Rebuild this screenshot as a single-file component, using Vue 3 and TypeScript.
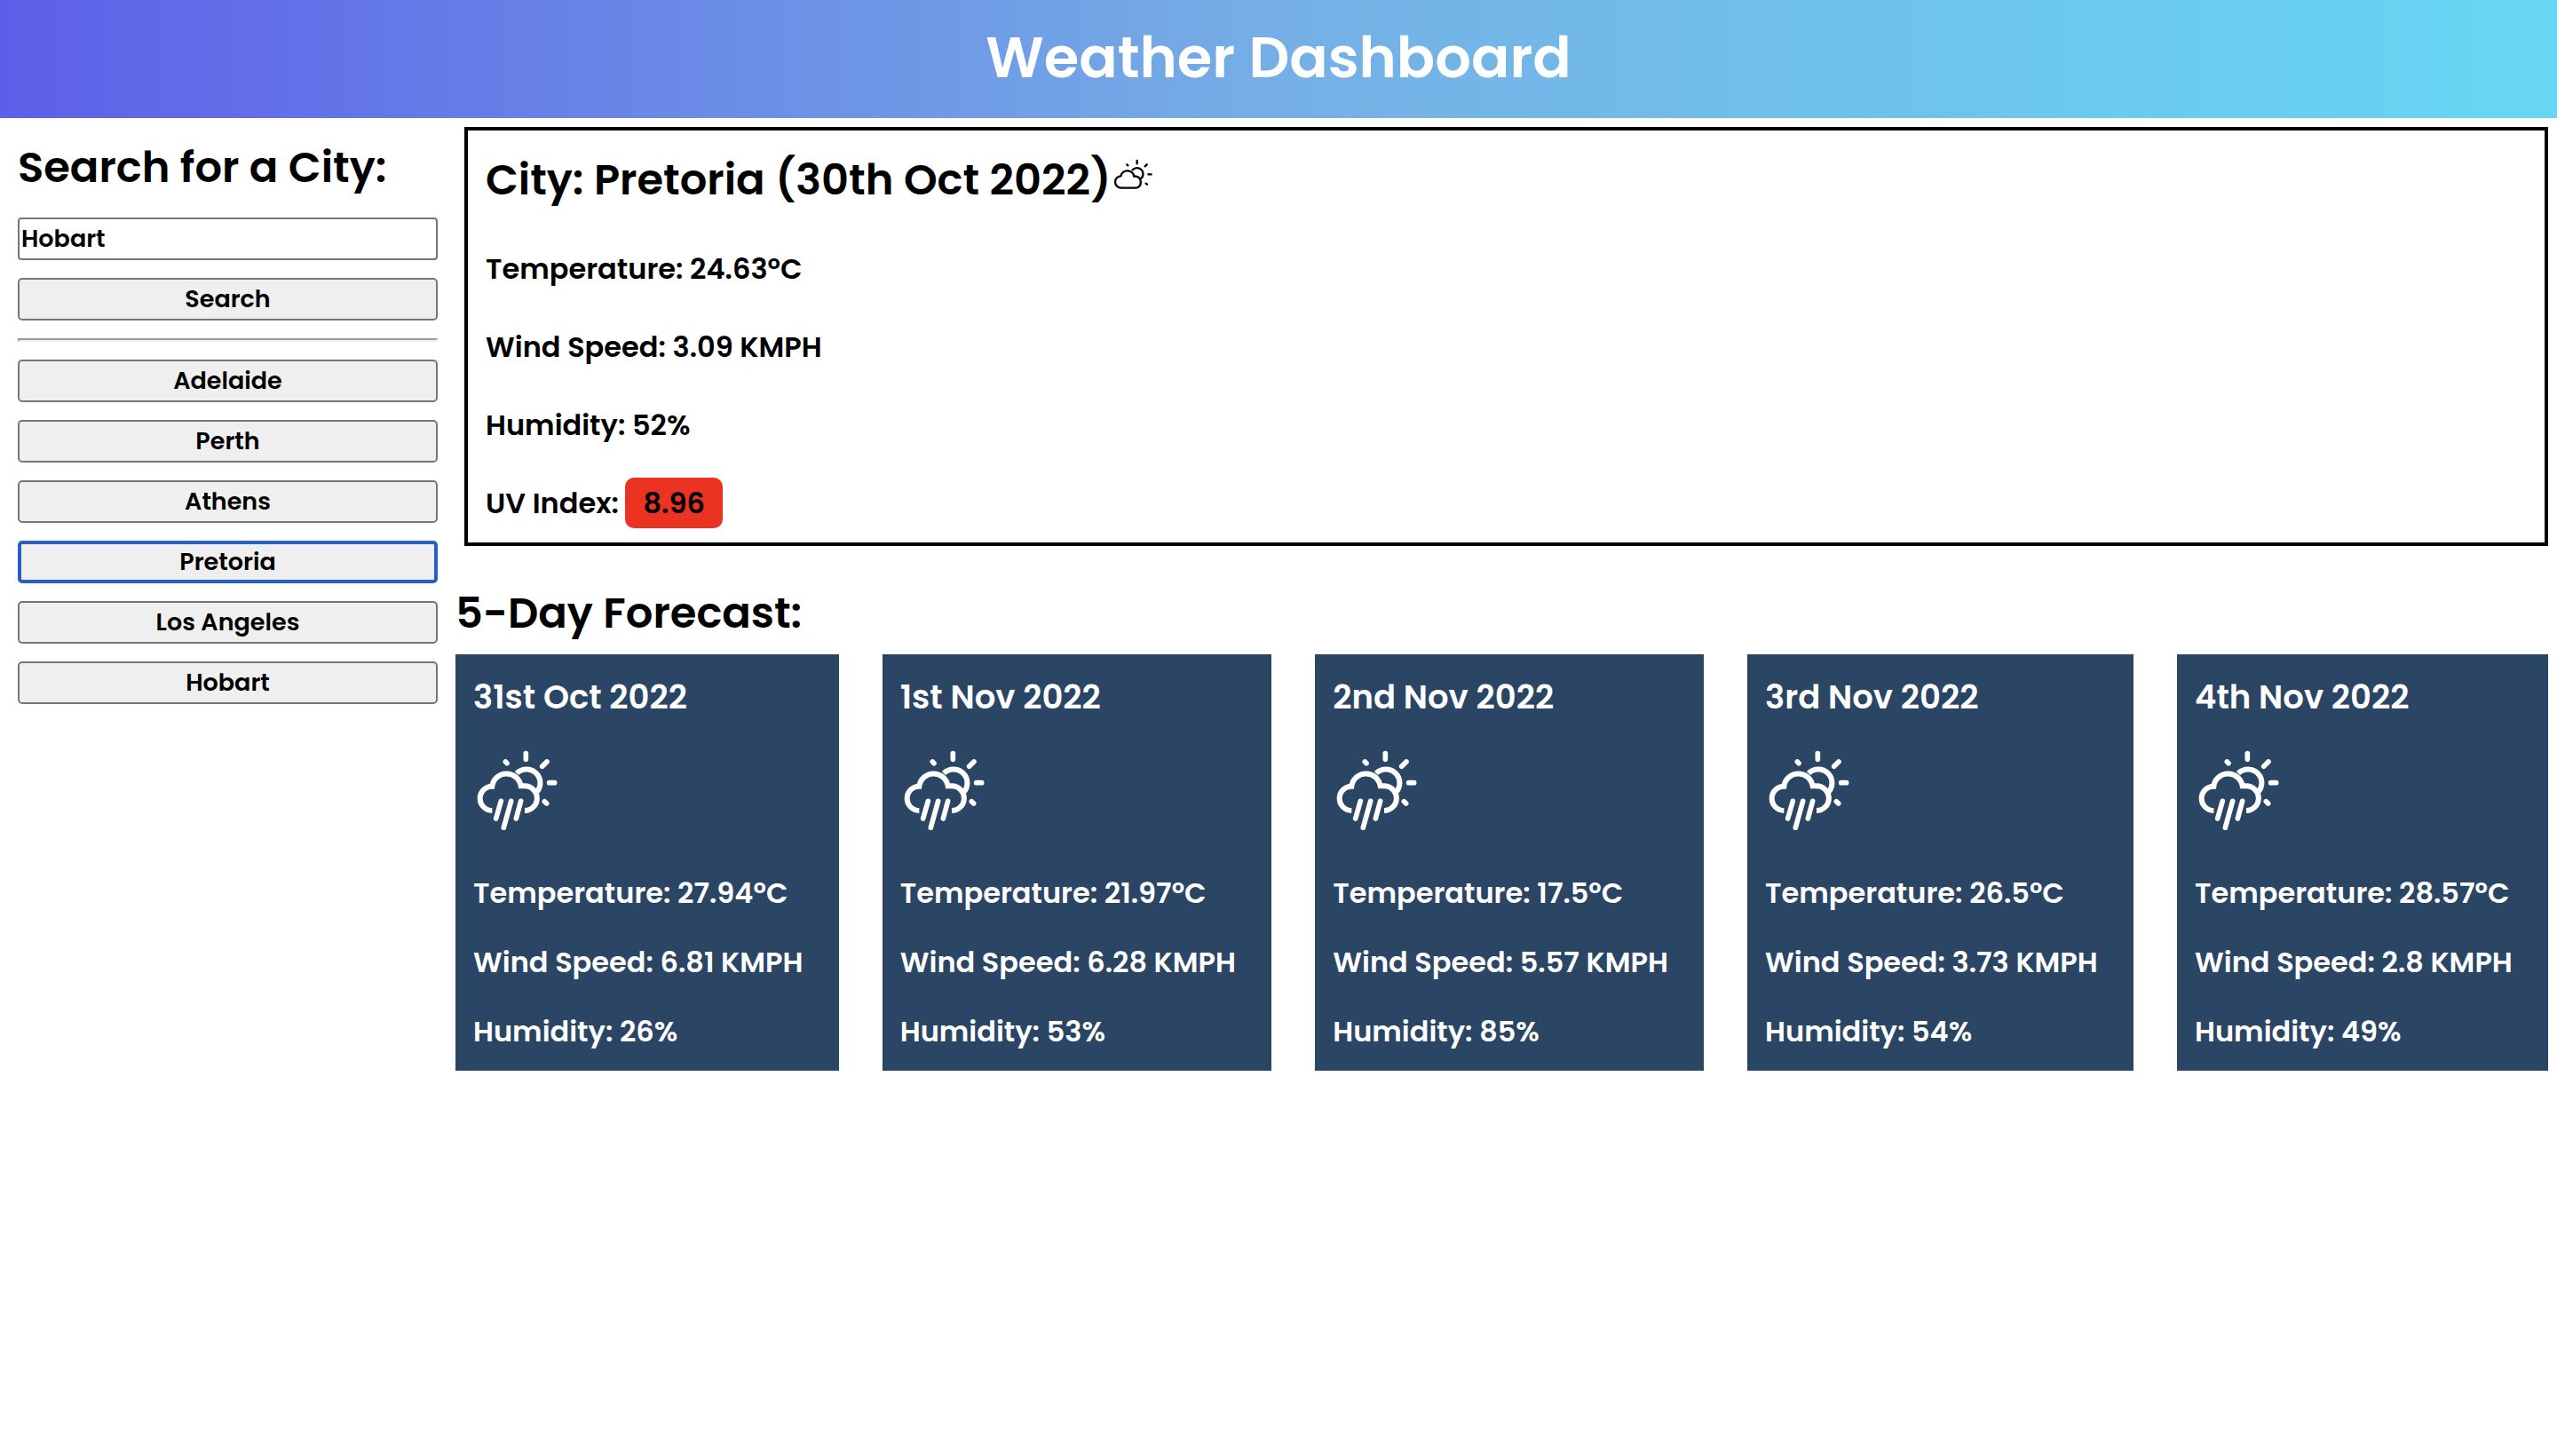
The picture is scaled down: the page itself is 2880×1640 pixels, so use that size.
<script setup lang="ts">
import { ref } from 'vue'

interface ForecastDay {
  date: string
  temperature: string
  wind: string
  humidity: string
}

const query = ref('Hobart')
const selected = ref('Pretoria')
const cities: string[] = ['Adelaide', 'Perth', 'Athens', 'Pretoria', 'Los Angeles', 'Hobart']

const forecast: ForecastDay[] = [
  { date: '31st Oct 2022', temperature: '27.94', wind: '6.81', humidity: '26' },
  { date: '1st Nov 2022', temperature: '21.97', wind: '6.28', humidity: '53' },
  { date: '2nd Nov 2022', temperature: '17.5', wind: '5.57', humidity: '85' },
  { date: '3rd Nov 2022', temperature: '26.5', wind: '3.73', humidity: '54' },
  { date: '4th Nov 2022', temperature: '28.57', wind: '2.8', humidity: '49' },
]

function search() {
  selected.value = query.value
}
</script>

<template>
  <div class="page">
    <header class="banner">
      <h1>Weather Dashboard</h1>
    </header>

    <div class="content">
      <aside class="sidebar">
        <h2><label for="city">Search for a City:</label></h2>
        <form class="search" @submit.prevent="search">
          <input id="city" v-model="query" type="text" class="field" autocomplete="off" />
          <button type="submit" class="button">Search</button>
        </form>
        <hr class="rule" />
        <nav class="history" aria-label="Recent cities">
          <button
            v-for="city in cities"
            :key="city"
            type="button"
            class="button"
            :class="{ active: city === selected }"
            @click="selected = city"
          >{{ city }}</button>
        </nav>
      </aside>

      <main class="main">
        <section class="current">
          <h2 class="city">
            City: Pretoria (30th Oct 2022)
            <svg class="cloud-sun" viewBox="72 54 132 105" aria-hidden="true">
              <path d="M99 152A20 20 0 0 1 97 112A23 23 0 0 1 142 113H149A20 20 0 0 1 149 152Z" />
              <path d="M137 91A20 20 0 0 1 167 119" />
              <path d="M152 60V70M179 79L185 73M190 106H200M182 137L186 140M118 73L121 76" />
            </svg>
          </h2>
          <p>Temperature: 24.63ºC</p>
          <p>Wind Speed: 3.09 KMPH</p>
          <p>Humidity: 52%</p>
          <p>UV Index: <span class="uv">8.96</span></p>
        </section>

        <section class="forecast">
          <h2>5-Day Forecast:</h2>
          <div class="days">
            <article v-for="day in forecast" :key="day.date" class="day">
              <h3>{{ day.date }}</h3>
              <svg class="rain-sun" viewBox="39 45 288 270" aria-hidden="true">
                <path class="cloud" d="M103 249A41 41 0 0 1 103 167A49 49 0 0 1 200 166H213A41 41 0 0 1 213 249" />
                <path class="cloud" d="M186 123A46 46 0 0 1 252 188" />
                <path d="M217 56V76M272 100L288 84M296 155H314M280 218L287 225M148 84L153 89" />
                <path d="M133 217L116 276M167 217L142 307M200 217L184 276" />
              </svg>
              <p>Temperature: {{ day.temperature }}ºC</p>
              <p>Wind Speed: {{ day.wind }} KMPH</p>
              <p>Humidity: {{ day.humidity }}%</p>
            </article>
          </div>
        </section>
      </main>
    </div>
  </div>
</template>

<style>
body {
  background: #fff;
}
</style>

<style scoped>
.page {
  color: #000;
  font-family: Poppins, "Open Sans", sans-serif;
  font-size: 32px;
  font-weight: 600;
}

h1,
h2,
h3,
p {
  margin: 0;
  font-weight: 600;
}

h2 {
  font-size: 48px;
  line-height: 112px;
}

.banner {
  padding-bottom: 3px;
  background: linear-gradient(90deg, #5d5fe8 0%, #75afe5 50%, #66d7f3 100%);
  color: #fff;
  text-align: center;
}

h1 {
  font-size: 64px;
  line-height: 130px;
}

.content {
  display: flex;
  align-items: flex-start;
}

.sidebar {
  box-sizing: border-box;
  flex: 0 0 513px;
  padding: 0 20px;
}

.search,
.history {
  display: flex;
  flex-direction: column;
  gap: 20px;
}

.field,
.button {
  box-sizing: border-box;
  width: 100%;
  height: 48px;
  border: 2px solid #767676;
  border-radius: 5px;
  color: #000;
  font-family: inherit;
  font-size: 27px;
  font-weight: 600;
  line-height: 40px;
}

.field {
  padding: 0 2px;
  background: #fff;
  border-radius: 4px;
}

.button {
  padding: 0 12px;
  background: #efefef;
  text-align: center;
}

.button.active {
  border: 4px solid #265fc9;
}

.rule {
  height: 0;
  margin: 20px 0;
  border: 2px solid;
  border-color: #9a9a9a #eee #eee #9a9a9a;
}

.main {
  flex: 1;
  min-width: 0;
  padding: 10px 10px 0 0;
}

.current {
  margin-left: 10px;
  padding: 0 20px;
  border: 4px solid #000;
}

.current p {
  line-height: 88px;
}

.city {
  display: flex;
  align-items: center;
}

.cloud-sun {
  width: 44px;
  height: 35px;
  padding: 0 0 14px 3px;
  fill: none;
  stroke: #000;
  stroke-width: 7;
  stroke-linecap: round;
}

.uv {
  display: inline-block;
  padding: 0 20px;
  border-radius: 10px;
  background: #eb3323;
  line-height: 57px;
}

.forecast {
  margin-top: 30px;
}

.forecast h2 {
  line-height: 92px;
}

.days {
  display: flex;
  gap: 49px;
}

.day {
  flex: 1 1 auto;
  padding: 0 20px 5px;
  background: #2b4565;
  color: #fff;
}

.day h3 {
  font-size: 37px;
  line-height: 96px;
}

.day p {
  line-height: 78px;
  white-space: nowrap;
}

.rain-sun {
  display: block;
  width: 96px;
  height: 90px;
  margin: 12px 0 32px;
  fill: none;
  stroke: #fff;
  stroke-width: 17;
  stroke-linecap: round;
}

.cloud {
  stroke-width: 18;
  stroke-linecap: butt;
}
</style>
